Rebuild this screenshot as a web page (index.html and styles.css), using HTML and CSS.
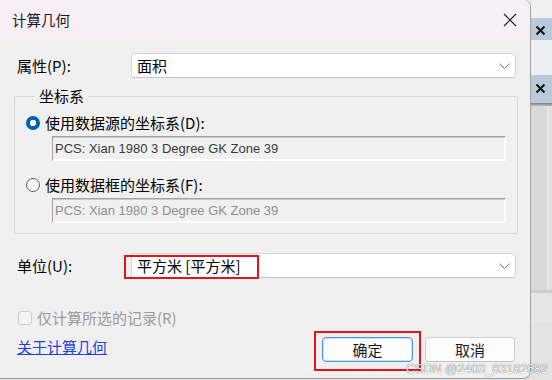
FILE: index.html
```html
<!DOCTYPE html>
<html lang="zh-CN">
<head>
<meta charset="utf-8">
<title>计算几何</title>
<link rel="stylesheet" href="styles.css">
</head>
<body>
<div class="screen">
  <div class="dialog">
    <div class="titlebar">
      <span class="title">计算几何</span>
      <svg class="close" width="14" height="14" viewBox="0 0 14 14"><path d="M1 1 L13 13 M13 1 L1 13" stroke="#1a1a1a" stroke-width="1.1" fill="none"/></svg>
    </div>
    <div class="body">
      <div class="row">
        <span class="label">属性(P):</span>
        <div class="combo">
          <span class="combo-text">面积</span>
          <svg class="chev" width="11" height="6" viewBox="0 0 11 6"><path d="M0.5 0.5 L5.5 5.5 L10.5 0.5" stroke="#707070" stroke-width="1" fill="none"/></svg>
        </div>
      </div>

      <fieldset class="group">
        <legend class="legend">坐标系</legend>
        <div class="radio-row">
          <span class="radio checked"></span>
          <span>使用数据源的坐标系(D):</span>
        </div>
        <div class="textbox">PCS: Xian 1980 3 Degree GK Zone 39</div>
        <div class="radio-row second">
          <span class="radio"></span>
          <span>使用数据框的坐标系(F):</span>
        </div>
        <div class="textbox disabled">PCS: Xian 1980 3 Degree GK Zone 39</div>
      </fieldset>

      <div class="row unit-row">
        <span class="label">单位(U):</span>
        <div class="combo">
          <span class="combo-text">平方米 [平方米]</span>
          <svg class="chev" width="11" height="6" viewBox="0 0 11 6"><path d="M0.5 0.5 L5.5 5.5 L10.5 0.5" stroke="#707070" stroke-width="1" fill="none"/></svg>
          <span class="mark mark-unit"></span>
        </div>
      </div>

      <div class="check-row">
        <span class="checkbox"></span>
        <span class="check-text">仅计算所选的记录(R)</span>
      </div>

      <div class="bottom-row">
        <a class="link" href="#">关于计算几何</a>
        <div class="buttons">
          <div class="btn default">确定<span class="mark mark-ok"></span></div>
          <div class="btn">取消</div>
        </div>
      </div>
    </div>
  </div>
  <div class="side">
    <div class="s-top"></div>
    <div class="s-tab t1"><svg width="11" height="11" viewBox="0 0 11 11"><path d="M1.5 1.5 L9.5 9.5 M9.5 1.5 L1.5 9.5" stroke="#111" stroke-width="2" fill="none"/></svg></div>
    <div class="s-gap"></div>
    <div class="s-tab t2"><svg width="11" height="11" viewBox="0 0 11 11"><path d="M1.5 1.5 L9.5 9.5 M9.5 1.5 L1.5 9.5" stroke="#111" stroke-width="2" fill="none"/></svg></div>
    <div class="s-shadow"></div>
    <div class="s-panel"></div>
    <div class="s-line"></div>
    <div class="s-light"></div>
    <div class="s-rest"></div>
  </div>
  <div class="watermark">CSDN @2403_83182682</div>
</div>
</body>
</html>
```

FILE: styles.css
```css
* { box-sizing: border-box; }

html, body {
  margin: 0;
  padding: 0;
}

body {
  width: 552px;
  height: 380px;
  overflow: hidden;
  font-family: "Noto Sans CJK SC", "Liberation Sans", sans-serif;
  font-size: 15px;
  color: #000;
}

.screen {
  position: relative;
  display: flex;
  width: 552px;
  height: 380px;
  background: #e2e2e2;
}

.dialog {
  width: 531px;
  height: 379px;
  flex: none;
  display: flex;
  flex-direction: column;
  background: #f0f0f0;
  border-right: 1px solid #a3a3a3;
  border-bottom: 1px solid #9c9c9c;
  border-radius: 0 8px 8px 0;
  overflow: hidden;
}

.titlebar {
  height: 40px;
  flex: none;
  display: flex;
  align-items: center;
  justify-content: space-between;
  padding: 0 13px 0 12px;
  background: #f7eef6;
}

.title {
  font-size: 14.5px;
  line-height: 20px;
  color: #1a1a1a;
}

.close {
  display: block;
  margin-top: -1px;
}

.body {
  padding: 0 12px 0 14px;
}

.row {
  display: flex;
  align-items: center;
  height: 25px;
  margin-top: 13px;
  padding-left: 3px;
}

.label {
  width: 114px;
  flex: none;
  line-height: 20px;
}

.combo {
  position: relative;
  width: 385px;
  height: 25px;
  flex: none;
  display: flex;
  align-items: center;
  justify-content: space-between;
  padding: 0 5px 0 5px;
  background: #fff;
  border: 1px solid #d6d6d6;
  border-bottom-color: #c4c4c4;
  border-radius: 3px;
}

.combo-text {
  line-height: 20px;
}

.chev {
  display: block;
}

.group {
  margin: 8px 0 0 0;
  padding: 8px 11px 10px 11px;
  border: 1px solid #d8d8d8;
  border-radius: 2px;
  min-width: 0;
}

.legend {
  padding: 0 4px;
  margin-left: 9px;
  line-height: 20px;
  font-size: 15px;
}

.radio-row {
  display: flex;
  align-items: center;
  gap: 5px;
  height: 18px;
  line-height: 18px;
}

.radio-row.second {
  margin-top: 15px;
}

.radio {
  width: 14px;
  height: 14px;
  flex: none;
  border-radius: 50%;
  border: 1px solid #5f5f5f;
  background: #f7f7f7;
}

.radio.checked {
  border: none;
  background: radial-gradient(circle, #fff 0 3px, #005fb8 3.5px);
}

.textbox {
  margin: 4px 0 0 26px;
  height: 25px;
  padding: 3px 0 0 2px;
  font-family: "Liberation Sans", sans-serif;
  font-size: 13px;
  line-height: 18px;
  color: #3a3a3a;
  border: 1px solid;
  border-color: #a0a0a0 #fdfdfd #fdfdfd #a0a0a0;
  box-shadow: inset 0 1px 0 #c9c9c9, inset -1px -1px 0 #ffffff;
  white-space: nowrap;
  overflow: hidden;
}

.textbox.disabled {
  color: #8f8f8f;
}

.unit-row {
  margin-top: 19px;
}

.mark {
  position: absolute;
  border: 2px solid #e3141e;
  pointer-events: none;
}

.mark-unit {
  left: -8px;
  top: 1px;
  width: 135px;
  height: 24px;
}

.check-row {
  display: flex;
  align-items: center;
  gap: 5px;
  height: 18px;
  margin-top: 31px;
  padding-left: 4px;
}

.checkbox {
  width: 14px;
  height: 14px;
  flex: none;
  border: 1px solid #cbcbcb;
  border-radius: 3px;
  background: #f4f4f4;
}

.check-text {
  color: #9a9a9a;
  line-height: 18px;
}

.bottom-row {
  display: flex;
  align-items: flex-start;
  justify-content: space-between;
  margin-top: 10px;
  padding-left: 3px;
  padding-right: 3px;
}

.link {
  color: #1f3fe0;
  text-decoration: underline;
  line-height: 17px;
  padding-top: 1px;
}

.buttons {
  display: flex;
  gap: 12px;
}

.btn {
  position: relative;
  width: 90px;
  height: 25px;
  display: flex;
  align-items: center;
  justify-content: center;
  background: #fdfdfd;
  border: 1px solid #d0d0d0;
  border-bottom-color: #c0c0c0;
  border-radius: 4px;
  line-height: 20px;
  color: #1a1a1a;
}

.btn.default {
  width: 91px;
  border: 1px solid #4b95e0;
  box-shadow: inset 0 0 0 1px #cfe3f8;
}

.mark-ok {
  left: -9px;
  top: -7px;
  width: 107px;
  height: 40px;
}

.side {
  flex: 1;
  display: flex;
  flex-direction: column;
}

.s-top {
  height: 18px;
  background: #f1f1f1;
}

.s-tab {
  display: flex;
  align-items: center;
  padding-left: 4px;
  background: #b9cadd;
}

.s-tab.t1 {
  height: 22px;
  padding-top: 2px;
}

.s-tab.t2 {
  height: 28px;
  padding-bottom: 2px;
}

.s-gap {
  height: 35px;
  background: #edeff2;
}

.s-shadow {
  height: 3px;
  background: linear-gradient(#7d7d7d, #bdbdbd);
}

.s-panel {
  height: 184px;
  background: #d9d9d9;
  box-shadow: inset -4px 0 0 #dfdfdf, inset -5px 0 0 #e9e9e9;
}

.s-line {
  height: 3px;
  background: #cdcdcd;
}

.s-light {
  height: 29px;
  background: #e6e6e6;
}

.s-rest {
  flex: 1;
  background: #e3e3e3;
}

.watermark {
  position: absolute;
  right: 4px;
  bottom: 5px;
  font-family: "Liberation Sans", sans-serif;
  font-size: 12.5px;
  line-height: 12px;
  color: #f6f6f6;
  text-shadow: 0 0 1px rgba(0, 0, 0, 0.5), 0 0 1px rgba(0, 0, 0, 0.35);
  white-space: nowrap;
}
```
